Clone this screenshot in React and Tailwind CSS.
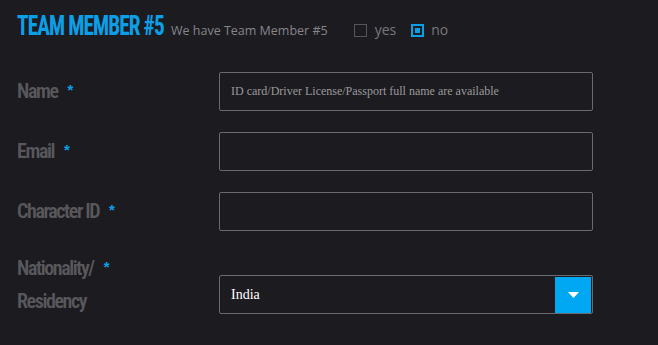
function Label({ children }) {
  return (
    <span className="block whitespace-nowrap font-['Roboto',sans-serif] text-[20px] font-semibold tracking-[-1.4px] text-[#58585c] font-stretch-[75%]">
      {children}
    </span>
  );
}

function Star() {
  return <span className="ml-[10px] mt-[7px] block font-['Liberation_Sans',sans-serif] text-[15px] font-bold leading-none text-[#0aa0e8]">*</span>;
}

function TextRow({ label, placeholder }) {
  return (
    <div className="flex h-[39px] items-center">
      <div className="flex w-[202px] items-start leading-[33px]">
        <Label>{label}</Label>
        <Star />
      </div>
      <input
        type="text"
        placeholder={placeholder}
        className="h-[39px] w-[374px] rounded-[2px] border border-[#6a6a6e] bg-transparent px-[11px] font-['Liberation_Serif',serif] text-[12px] text-white outline-none placeholder:text-[#9a9a9a]"
      />
    </div>
  );
}

export default function App() {
  return (
    <div className="min-h-[345px] w-[658px] bg-[#1c1b20] pl-[17px] pt-[12px]">
      <div className="flex items-baseline">
        {/* heading font is far narrower than anything installed, so squeeze it */}
        <span className="inline-block w-[146px] whitespace-nowrap">
          <span className="inline-block origin-left font-['Roboto',sans-serif] text-[28px] font-bold leading-[28px] tracking-[-1.2px] text-[#0aa0e8] font-stretch-[75%] [transform:scaleX(0.76)]">
            TEAM MEMBER #5
          </span>
        </span>
        <span className="ml-[8px] font-['Open_Sans',sans-serif] text-[12.5px] text-[#85858a]">We have Team Member #5</span>
        <label className="ml-[26px] inline-block font-['Open_Sans',sans-serif] text-[14px] text-[#77777c]">
          <span className="mr-[8px] inline-block h-[13px] w-[13px] border border-[#55555a] align-[-2px]" />
          yes
        </label>
        <label className="ml-[15px] inline-block font-['Open_Sans',sans-serif] text-[14px] text-[#77777c]">
          <span className="mr-[7px] inline-block h-[13px] w-[13px] border-2 border-[#0aa0e8] p-[2px] align-[-2px]">
            <span className="block h-[5px] w-[5px] bg-[#0aa0e8]" />
          </span>
          no
        </label>
      </div>

      <div className="mt-[31px] flex flex-col gap-[21px]">
        <TextRow label="Name" placeholder="ID card/Driver License/Passport full name are available" />
        <TextRow label="Email" placeholder="" />
        <TextRow label="Character ID" placeholder="" />

        <div className="flex">
          <div className="flex w-[202px] items-start leading-[33px]">
            <div className="flex flex-col">
              <Label>Nationality/</Label>
              <Label>Residency</Label>
            </div>
            <Star />
          </div>
          <div className="mt-[23px] flex h-[39px] w-[374px] items-center justify-between rounded-[2px] border border-[#6a6a6e] pl-[11px] pr-[1px]">
            <span className="font-['Liberation_Serif',serif] text-[14px] text-white">India</span>
            <span className="flex h-[36px] w-[36px] items-center justify-center bg-[#00a8f3]">
              <svg width="11" height="6" viewBox="0 0 11 6">
                <path d="M0 0h11L5.5 6z" fill="#fff" />
              </svg>
            </span>
          </div>
        </div>
      </div>
    </div>
  );
}
